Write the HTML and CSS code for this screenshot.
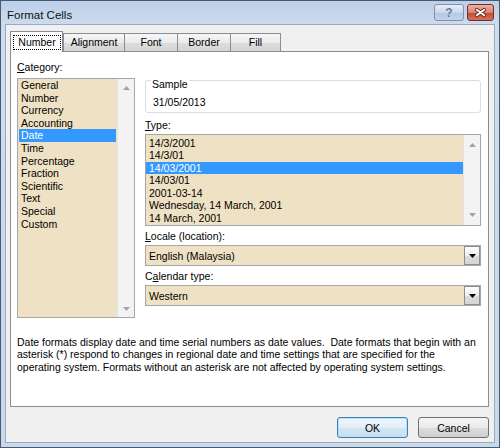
FILE: index.html
```html
<!DOCTYPE html>
<html lang="en">
<head>
    <meta charset="UTF-8">
    <title>Format Cells</title>
    <link rel="stylesheet" href="styles.css">
</head>
<body>
    <div class="window">
        <div class="titlebar">
            <span class="title">Format Cells</span>
            <div class="caption-buttons">
                <span class="cap-btn help">?</span>
                <span class="cap-btn close">
                    <svg width="27" height="17" viewBox="0 0 27 17">
                        <path d="M9.5 5.5 L17.5 11.5 M17.5 5.5 L9.5 11.5" stroke="#6b1f14" stroke-width="4" stroke-linecap="round"/>
                        <path d="M9.5 5.5 L17.5 11.5 M17.5 5.5 L9.5 11.5" stroke="#fff" stroke-width="2.2" stroke-linecap="round"/>
                    </svg>
                </span>
            </div>
        </div>
        <div class="client">
            <div class="tabs">
                <div class="tab active"><span class="focus">Number</span></div>
                <div class="tab tab-alignment">Alignment</div>
                <div class="tab tab-font">Font</div>
                <div class="tab tab-border">Border</div>
                <div class="tab tab-fill">Fill</div>
            </div>
            <div class="panel">
                <div class="columns">
                    <div class="col-left">
                        <div class="label"><u>C</u>ategory:</div>
                        <div class="listbox category">
                            <ul class="items">
                                <li>General</li>
                                <li>Number</li>
                                <li>Currency</li>
                                <li>Accounting</li>
                                <li class="selected">Date</li>
                                <li>Time</li>
                                <li>Percentage</li>
                                <li>Fraction</li>
                                <li>Scientific</li>
                                <li>Text</li>
                                <li>Special</li>
                                <li>Custom</li>
                            </ul>
                            <div class="scrollbar">
                                <svg width="7" height="4" viewBox="0 0 7 4"><path d="M0 4 L3.5 0 L7 4 Z" fill="#a3a3a3"/></svg>
                                <svg width="7" height="4" viewBox="0 0 7 4"><path d="M0 0 L3.5 4 L7 0 Z" fill="#a3a3a3"/></svg>
                            </div>
                        </div>
                    </div>
                    <div class="col-right">
                        <div class="sample">
                            <span class="sample-label">Sample</span>
                            <div class="sample-value">31/05/2013</div>
                        </div>
                        <div class="label type-label"><u>T</u>ype:</div>
                        <div class="listbox type">
                            <ul class="items">
                                <li>14/3/2001</li>
                                <li>14/3/01</li>
                                <li class="selected">14/03/2001</li>
                                <li>14/03/01</li>
                                <li>2001-03-14</li>
                                <li>Wednesday, 14 March, 2001</li>
                                <li>14 March, 2001</li>
                            </ul>
                            <div class="scrollbar">
                                <svg width="7" height="4" viewBox="0 0 7 4"><path d="M0 4 L3.5 0 L7 4 Z" fill="#a3a3a3"/></svg>
                                <svg width="7" height="4" viewBox="0 0 7 4"><path d="M0 0 L3.5 4 L7 0 Z" fill="#a3a3a3"/></svg>
                            </div>
                        </div>
                        <div class="label combo-label"><u>L</u>ocale (location):</div>
                        <div class="combo">
                            <span class="combo-text">English (Malaysia)</span>
                            <span class="drop-btn">
                                <svg width="7" height="4" viewBox="0 0 7 4"><path d="M0 0 L3.5 4 L7 0 Z" fill="#000"/></svg>
                            </span>
                        </div>
                        <div class="label combo-label">C<u>a</u>lendar type:</div>
                        <div class="combo">
                            <span class="combo-text">Western</span>
                            <span class="drop-btn">
                                <svg width="7" height="4" viewBox="0 0 7 4"><path d="M0 0 L3.5 4 L7 0 Z" fill="#000"/></svg>
                            </span>
                        </div>
                    </div>
                </div>
                <p class="note">Date formats display date and time serial numbers as date values.&nbsp; Date formats that begin with an<br>asterisk (*) respond to changes in regional date and time settings that are specified for the<br>operating system. Formats without an asterisk are not affected by operating system settings.</p>
            </div>
            <div class="footer">
                <button class="btn default">OK</button>
                <button class="btn">Cancel</button>
            </div>
        </div>
    </div>
</body>
</html>
```

FILE: styles.css
```css
* {
    margin: 0;
    padding: 0;
    box-sizing: border-box;
}

body {
    width: 500px;
    height: 448px;
    font-family: "Liberation Sans", Arial, sans-serif;
    font-size: 10.5px;
    color: #000;
    background-color: #fff;
}

.window {
    width: 500px;
    height: 448px;
    border: 1px solid #4a5a6e;
    background: linear-gradient(#bccfe8, #cddcee 24px, #c9d8ea);
    padding: 0 4px 4px 4px;
}

.titlebar {
    height: 23px;
    display: flex;
    justify-content: space-between;
    margin: 0 -4px;
    padding: 0 5px 0 6px;
}

.title {
    font-size: 11.5px;
    line-height: 23px;
    padding-top: 3px;
    color: #111;
}

.caption-buttons {
    display: flex;
    gap: 3px;
    padding-top: 3px;
}

.cap-btn {
    display: flex;
    align-items: center;
    justify-content: center;
    height: 17px;
    border-radius: 3px;
}

.help {
    width: 30px;
    border: 1px solid #7d93b0;
    background: linear-gradient(#e6eef8, #c9d8eb 50%, #b3c8e2 51%, #c3d4ea);
    color: #6a7d96;
    font-weight: bold;
    font-size: 12px;
}

.close {
    width: 27px;
    border: 1px solid #7c2b20;
    background: linear-gradient(#eab3a5, #d8836d 50%, #c24a32 51%, #d2765c);
}

.client {
    height: 419px;
    background-color: #f0f0f0;
    border: 1px solid #97abc3;
    padding: 0 5px 0 4px;
}

.tabs {
    display: flex;
    align-items: flex-end;
    height: 26px;
    padding-top: 6px;
}

.tab {
    height: 18px;
    border: 1px solid #898c95;
    border-bottom: none;
    background: linear-gradient(#f7f7f7, #ebebeb 50%, #dddddd 51%, #d4d4d4);
    text-align: center;
    line-height: 17px;
    margin-left: -1px;
}

.tab.active {
    width: 53px;
    height: 21px;
    margin: 0 0 -1px 0;
    background: #fff;
    position: relative;
    z-index: 1;
}

.focus {
    display: block;
    height: 15px;
    margin: 3px 1px 0 2px;
    border: 1px dotted #000;
    line-height: 13px;
}

.tab-alignment {
    width: 62px;
    margin-left: 0;
}

.tab-font {
    width: 54px;
}

.tab-border {
    width: 54px;
}

.tab-fill {
    width: 51px;
}

.panel {
    height: 356px;
    background-color: #fff;
    border: 1px solid #898c95;
    padding: 9px 0 0 6px;
}

.columns {
    display: grid;
    grid-template-columns: 118px 336px;
    column-gap: 10px;
    align-items: start;
}

.label {
    line-height: 13px;
}

.col-left .label {
    margin-bottom: 4px;
}

.listbox {
    display: flex;
    border: 1px solid #a3a7ad;
    background-color: #efe2c4;
}

.listbox.category {
    height: 240px;
}

.listbox.type {
    height: 92px;
    margin-top: 2px;
}

.items {
    flex: 1;
    list-style: none;
    padding: 0 1px;
}

.items li {
    line-height: 12.6px;
    padding-left: 2px;
    white-space: nowrap;
}

.type .items {
    padding: 1.5px 0 0 0;
}

.type .items li {
    padding-left: 3px;
}

.items li.selected {
    background-color: #3399ff;
    color: #fff;
}

.scrollbar {
    width: 17px;
    background-color: #f3f3f3;
    border-left: 1px solid #e4e4e4;
    display: flex;
    flex-direction: column;
    justify-content: space-between;
    align-items: center;
    padding: 7px 0 6px 0;
}

.type .scrollbar {
    padding: 8px 0 8px 0;
}

.sample {
    height: 33px;
    margin-top: 19px;
    border: 1px solid #d5dfe5;
    border-radius: 3px;
}

.sample-label {
    display: block;
    width: max-content;
    margin: -3px 0 0 5px;
    padding: 0 1px;
    background-color: #fff;
    line-height: 13px;
}

.sample-value {
    line-height: 13px;
    margin-top: 5px;
    padding-left: 7px;
}

.type-label {
    margin-top: 6px;
}

.combo-label {
    margin-top: 4px;
}

.combo {
    height: 21px;
    margin-top: 2px;
    display: flex;
    align-items: center;
    justify-content: space-between;
    border: 1px solid #a3a7ad;
    background-color: #efe2c4;
}

.combo-text {
    padding-left: 3px;
}

.drop-btn {
    width: 16px;
    height: 19px;
    display: flex;
    align-items: center;
    justify-content: center;
    border: 1px solid #8e8f8f;
    background: linear-gradient(#fdfdfd, #eeeeee 50%, #dddddd 51%, #d4d4d4);
}

.note {
    margin-top: 18px;
    line-height: 12.4px;
    white-space: nowrap;
}

.footer {
    display: flex;
    justify-content: flex-end;
    gap: 10px;
    margin-top: 10px;
}

.btn {
    width: 71px;
    height: 21px;
    font-family: "Liberation Sans", Arial, sans-serif;
    font-size: 10.5px;
    color: #000;
    border: 1px solid #707070;
    border-radius: 3px;
    background: linear-gradient(#f4f4f4, #ebebeb 50%, #dddddd 51%, #cfcfcf);
}

.btn.default {
    border-color: #3c7fb1;
    box-shadow: inset 0 0 0 1px #b9e0f8;
    background: linear-gradient(#eef6fb, #e2eef7 50%, #d2e5f2 51%, #c8dff0);
}
```
